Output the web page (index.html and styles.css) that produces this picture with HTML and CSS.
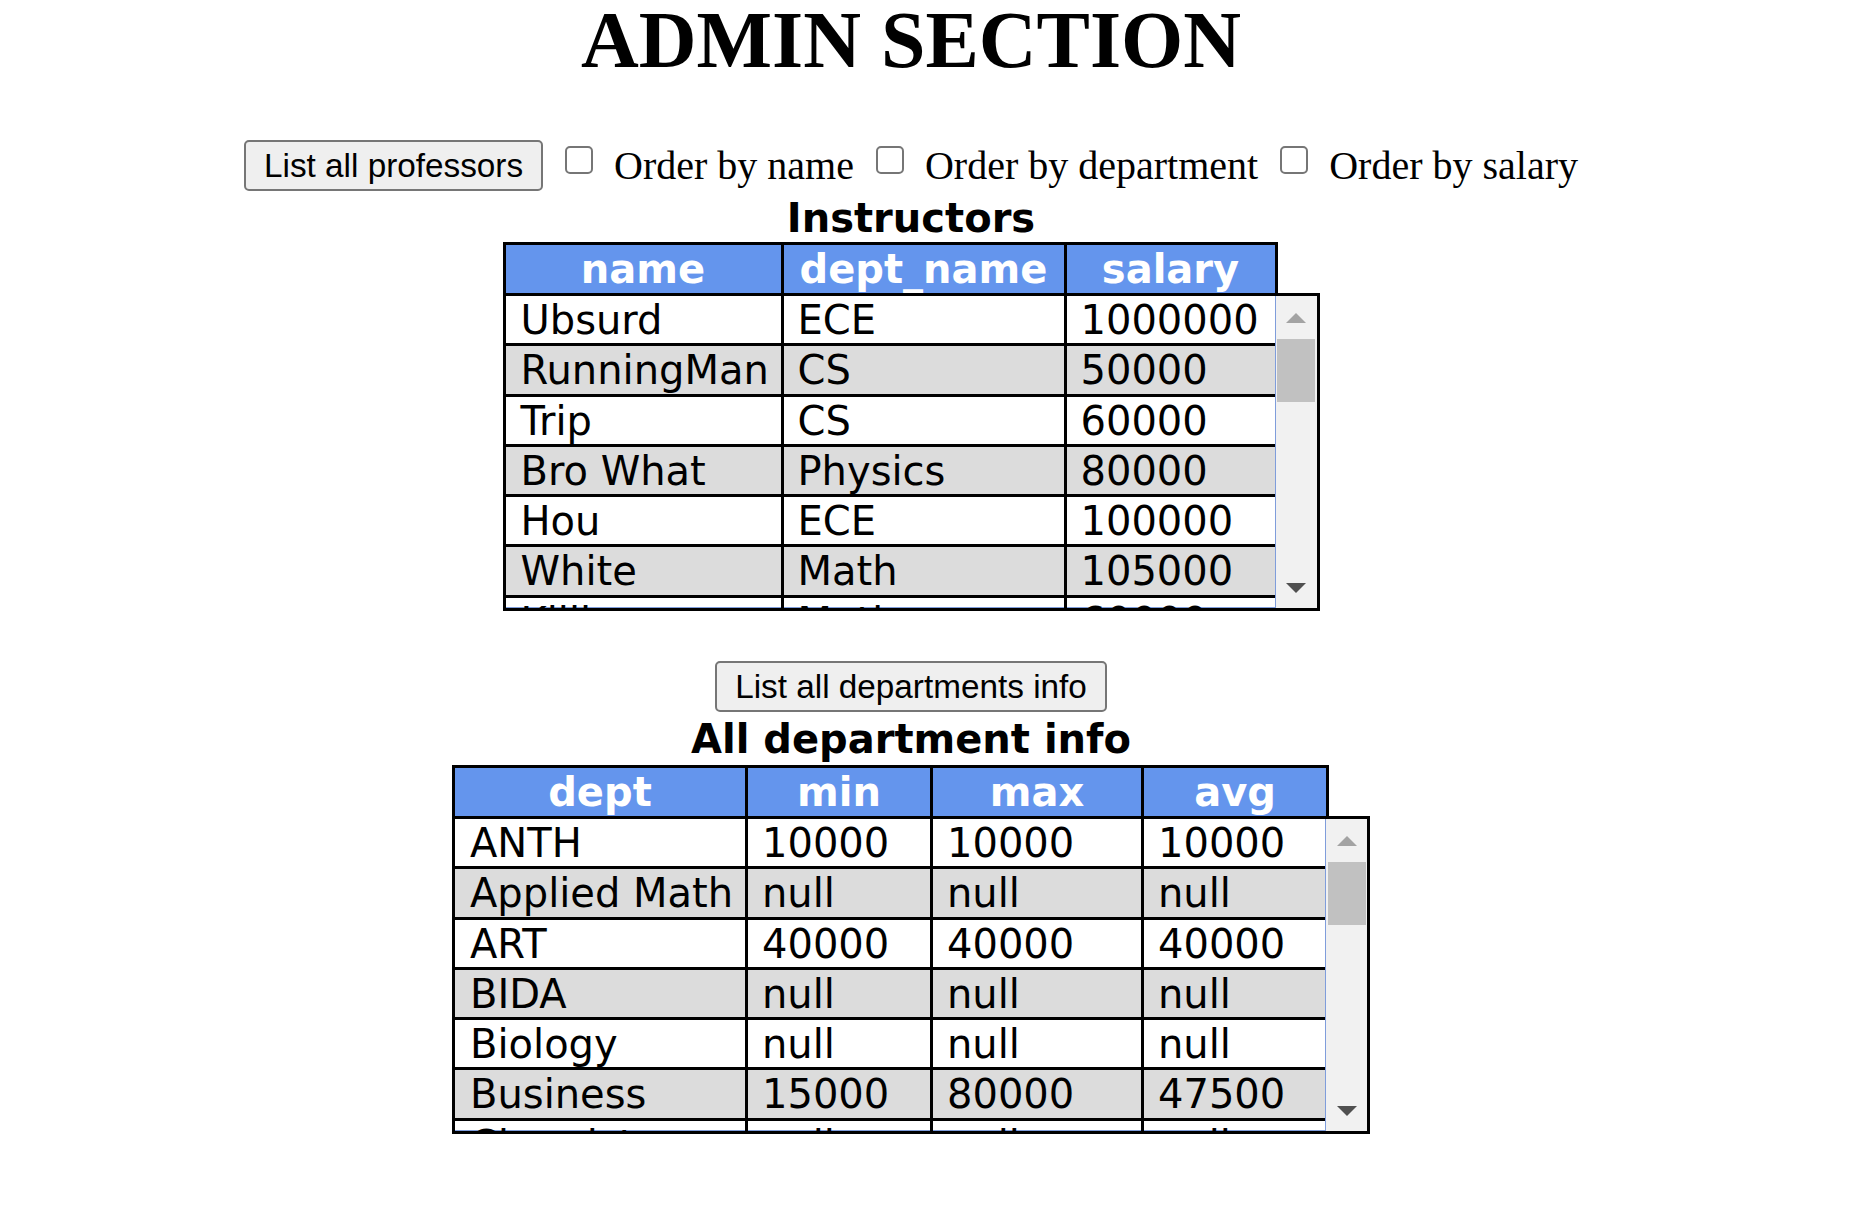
FILE: index.html
```html
<!DOCTYPE html>
<html>
<head>
<meta charset="utf-8">
<title>Admin Section</title>
<link rel="stylesheet" href="styles.css">
</head>
<body>
<div class="page">
  <h1 class="title">ADMIN SECTION</h1>

  <div class="controls">
    <button class="btn">List all professors</button>
    <label class="opt"><span class="box"></span>Order by name</label>
    <label class="opt"><span class="box"></span>Order by department</label>
    <label class="opt"><span class="box"></span>Order by salary</label>
  </div>

  <div class="caption">Instructors</div>
  <div class="grid grid-inst">
    <table class="head">
      <colgroup><col class="c-name"><col class="c-dept"><col class="c-sal"></colgroup>
      <tr><th>name</th><th>dept_name</th><th>salary</th></tr>
    </table>
    <div class="frame">
      <div class="viewport">
        <table class="body">
          <colgroup><col class="b-name"><col class="c-dept"><col class="b-sal"></colgroup>
          <tr><td>Ubsurd</td><td>ECE</td><td>1000000</td></tr>
          <tr class="alt"><td>RunningMan</td><td>CS</td><td>50000</td></tr>
          <tr><td>Trip</td><td>CS</td><td>60000</td></tr>
          <tr class="alt"><td>Bro What</td><td>Physics</td><td>80000</td></tr>
          <tr><td>Hou</td><td>ECE</td><td>100000</td></tr>
          <tr class="alt"><td>White</td><td>Math</td><td>105000</td></tr>
          <tr><td>Killian</td><td>Math</td><td>60000</td></tr>
        </table>
      </div>
      <div class="scrollbar">
        <div class="arrow up"></div>
        <div class="thumb"></div>
        <div class="track"></div>
        <div class="arrow down"></div>
      </div>
    </div>
  </div>

  <div class="section2">
    <button class="btn">List all departments info</button>
  </div>
  <div class="caption">All department info</div>
  <div class="grid grid-dept">
    <table class="head">
      <colgroup><col class="d-dept"><col class="d-min"><col class="d-max"><col class="d-avg"></colgroup>
      <tr><th>dept</th><th>min</th><th>max</th><th>avg</th></tr>
    </table>
    <div class="frame">
      <div class="viewport">
        <table class="body">
          <colgroup><col class="e-dept"><col class="d-min"><col class="d-max"><col class="e-avg"></colgroup>
          <tr><td>ANTH</td><td>10000</td><td>10000</td><td>10000</td></tr>
          <tr class="alt"><td>Applied Math</td><td>null</td><td>null</td><td>null</td></tr>
          <tr><td>ART</td><td>40000</td><td>40000</td><td>40000</td></tr>
          <tr class="alt"><td>BIDA</td><td>null</td><td>null</td><td>null</td></tr>
          <tr><td>Biology</td><td>null</td><td>null</td><td>null</td></tr>
          <tr class="alt"><td>Business</td><td>15000</td><td>80000</td><td>47500</td></tr>
          <tr><td>Chemistry</td><td>null</td><td>null</td><td>null</td></tr>
        </table>
      </div>
      <div class="scrollbar">
        <div class="arrow up"></div>
        <div class="thumb"></div>
        <div class="track"></div>
        <div class="arrow down"></div>
      </div>
    </div>
  </div>
</div>
</body>
</html>
```

FILE: styles.css
```css
html, body {
  margin: 0;
  padding: 0;
  background: #ffffff;
}

.page {
  width: 1822px;
  display: flex;
  flex-direction: column;
  align-items: center;
  font-family: "Liberation Serif", "Times New Roman", serif;
  color: #000;
}

.title {
  margin: 0;
  font-family: "Liberation Serif", "Times New Roman", serif;
  font-weight: bold;
  font-size: 80px;
  line-height: 80px;
}

.controls {
  margin-top: 60px;
  display: flex;
  align-items: center;
  height: 51px;
}

.btn {
  font-family: "Liberation Sans", Arial, sans-serif;
  font-size: 33.3px;
  color: #000;
  background: #efefef;
  border: 2px solid #767676;
  border-radius: 5px;
  height: 51px;
  padding: 0 18px;
  margin: 0;
  line-height: 47px;
}

.opt {
  display: flex;
  align-items: center;
  font-size: 40px;
  line-height: 46px;
  margin-left: 22px;
  padding-top: 0;
}

.box {
  display: inline-block;
  width: 28px;
  height: 28px;
  box-sizing: border-box;
  border: 2.5px solid #767676;
  border-radius: 5px;
  background: #fff;
  margin-right: 21px;
  margin-top: -11px;
}

.caption {
  font-family: "DejaVu Sans", Verdana, sans-serif;
  font-weight: bold;
  font-size: 40px;
  line-height: 47px;
  margin-top: 4px;
}

.grid {
  display: flex;
  flex-direction: column;
}
.grid-inst { width: 817px; }
.grid-dept { width: 918px; margin-top: 2px; }

table {
  border-collapse: separate;
  border-spacing: 0;
  table-layout: fixed;
  font-family: "DejaVu Sans", Verdana, sans-serif;
  font-size: 40px;
}

.head th {
  box-sizing: border-box;
  background: #6495ed;
  color: #fff;
  font-weight: bold;
  text-align: center;
  border-top: 3px solid #000;
  border-right: 3px solid #000;
  padding: 0;
  line-height: 48px;
  height: 51px;
  vertical-align: middle;
}
.head th:first-child { border-left: 3px solid #000; }

.grid-inst .head { width: 775px; }
.grid-dept .head { width: 877px; }

.c-name { width: 281px; }
.b-name { width: 278px; }
.c-dept { width: 283px; }
.c-sal { width: 211px; }
.b-sal { width: 208px; }

.d-dept { width: 296px; }
.e-dept { width: 293px; }
.d-min { width: 185px; }
.d-max { width: 211px; }
.d-avg { width: 185px; }
.e-avg { width: 184px; }

.frame {
  display: flex;
  border: 3px solid #000;
  height: 312px;
}

.viewport {
  flex: 1;
  overflow: hidden;
  box-shadow: inset 0 -1px 0 #7f9ddb;
}

.body td {
  box-sizing: border-box;
  padding: 2px 12px 0 14px;
  line-height: 45.3px;
  border-bottom: 3px solid #000;
  border-right: 3px solid #000;
  white-space: nowrap;
  overflow: hidden;
}
.body td:first-child { padding-left: 15px; }
.body td:last-child { border-right: 0; }
.body tr.alt td { background: #dcdcdc; }

.grid-inst .body { width: 769px; }
.grid-dept .body { width: 873px; }

.scrollbar {
  width: 42px;
  flex: none;
  background: #f1f1f1;
  border-left: 1px solid #7f9ddb;
  box-sizing: border-box;
  display: flex;
  flex-direction: column;
  align-items: center;
}

.arrow {
  height: 40px;
  width: 100%;
  position: relative;
}
.arrow::after {
  content: "";
  position: absolute;
  left: 50%;
  top: 50%;
  transform: translate(-50%, -50%);
  width: 0;
  height: 0;
  border-left: 10px solid transparent;
  border-right: 10px solid transparent;
}
.arrow.up::after { border-bottom: 10px solid #a3a3a3; margin-top: 2px; }
.arrow.down::after { border-top: 10px solid #505050; }

.thumb {
  width: 38px;
  height: 63px;
  background: #c1c1c1;
  margin-top: 3px;
}
.track { flex: 1; }

.section2 {
  margin-top: 50px;
  display: flex;
}
```
